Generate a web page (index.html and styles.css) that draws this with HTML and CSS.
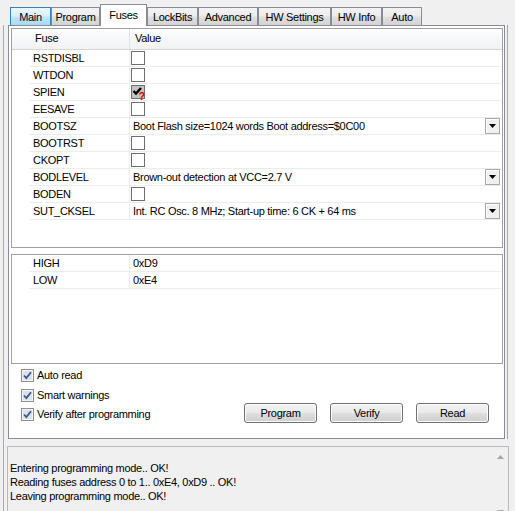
FILE: index.html
```html
<!DOCTYPE html>
<html>
<head>
<meta charset="utf-8">
<link rel="stylesheet" href="styles.css">
</head>
<body>
<div class="app">
  <div class="tabs">
    <div class="tab hover t-main">Main</div>
    <div class="tab t-program">Program</div>
    <div class="tab sel t-fuses">Fuses</div>
    <div class="tab t-lock">LockBits</div>
    <div class="tab t-adv">Advanced</div>
    <div class="tab t-hws">HW Settings</div>
    <div class="tab t-hwi">HW Info</div>
    <div class="tab t-auto">Auto</div>
  </div>
  <div class="main">
    <div class="panel-wrap">
      <div class="panel">
        <div class="grid grid1">
          <div class="hdr"><div class="rh"></div><div class="c1">Fuse</div><div class="c2">Value</div></div>
          <div class="row"><div class="c1">RSTDISBL</div><div class="c2"><span class="cb"></span></div></div>
          <div class="row"><div class="c1">WTDON</div><div class="c2"><span class="cb"></span></div></div>
          <div class="row"><div class="c1">SPIEN</div><div class="c2"><span class="cb ind"><svg width="16" height="16" viewBox="0 0 16 16"><path d="M2.5 6 L5 8.5 L10 3" fill="none" stroke="#000" stroke-width="2.4"/><text x="7.5" y="15" class="q">?</text></svg></span></div></div>
          <div class="row"><div class="c1">EESAVE</div><div class="c2"><span class="cb"></span></div></div>
          <div class="row"><div class="c1">BOOTSZ</div><div class="c2"><span class="val">Boot Flash size=1024 words Boot address=$0C00</span><span class="dd"><svg width="7" height="4" viewBox="0 0 7 4"><polygon points="0,0 7,0 3.5,4" fill="#000"/></svg></span></div></div>
          <div class="row"><div class="c1">BOOTRST</div><div class="c2"><span class="cb"></span></div></div>
          <div class="row"><div class="c1">CKOPT</div><div class="c2"><span class="cb"></span></div></div>
          <div class="row"><div class="c1">BODLEVEL</div><div class="c2"><span class="val">Brown-out detection at VCC=2.7 V</span><span class="dd"><svg width="7" height="4" viewBox="0 0 7 4"><polygon points="0,0 7,0 3.5,4" fill="#000"/></svg></span></div></div>
          <div class="row"><div class="c1">BODEN</div><div class="c2"><span class="cb"></span></div></div>
          <div class="row"><div class="c1">SUT_CKSEL</div><div class="c2"><span class="val">Int. RC Osc. 8 MHz; Start-up time: 6 CK + 64 ms</span><span class="dd"><svg width="7" height="4" viewBox="0 0 7 4"><polygon points="0,0 7,0 3.5,4" fill="#000"/></svg></span></div></div>
        </div>
        <div class="grid grid2">
          <div class="row"><div class="c1">HIGH</div><div class="c2"><span class="val">0xD9</span></div></div>
          <div class="row"><div class="c1">LOW</div><div class="c2"><span class="val">0xE4</span></div></div>
        </div>
        <div class="bottom">
          <div class="checks">
            <div class="chk"><svg class="wcb" width="13" height="13" viewBox="0 0 13 13"><rect x="0.5" y="0.5" width="12" height="12" fill="#f4f4f4" stroke="#8e8f8f"/><rect x="2" y="2" width="9" height="9" fill="#dde1e8"/><path d="M3 6.5 L5.3 9 L10 3.2" fill="none" stroke="#3b5896" stroke-width="1.8"/></svg><span>Auto read</span></div>
            <div class="chk"><svg class="wcb" width="13" height="13" viewBox="0 0 13 13"><rect x="0.5" y="0.5" width="12" height="12" fill="#f4f4f4" stroke="#8e8f8f"/><rect x="2" y="2" width="9" height="9" fill="#dde1e8"/><path d="M3 6.5 L5.3 9 L10 3.2" fill="none" stroke="#3b5896" stroke-width="1.8"/></svg><span>Smart warnings</span></div>
            <div class="chk"><svg class="wcb" width="13" height="13" viewBox="0 0 13 13"><rect x="0.5" y="0.5" width="12" height="12" fill="#f4f4f4" stroke="#8e8f8f"/><rect x="2" y="2" width="9" height="9" fill="#dde1e8"/><path d="M3 6.5 L5.3 9 L10 3.2" fill="none" stroke="#3b5896" stroke-width="1.8"/></svg><span>Verify after programming</span></div>
          </div>
          <div class="btns">
            <button class="btn">Program</button>
            <button class="btn">Verify</button>
            <button class="btn">Read</button>
          </div>
        </div>
      </div>
    </div>
    <div class="log">
      <div class="log-text">
        <div>Entering programming mode.. OK!</div>
        <div>Reading fuses address 0 to 1.. 0xE4, 0xD9 .. OK!</div>
        <div>Leaving programming mode.. OK!</div>
      </div>
      <div class="scroll">
        <span class="arr"><svg width="7" height="4" viewBox="0 0 7 4"><polygon points="0,4 7,4 3.5,0" fill="#a6a6a6"/></svg></span>
        <span class="arr"><svg width="7" height="4" viewBox="0 0 7 4"><polygon points="0,0 7,0 3.5,4" fill="#a6a6a6"/></svg></span>
      </div>
    </div>
  </div>
</div>
</body>
</html>
```
FILE: styles.css
```css
html, body {
  margin: 0;
  background: #f0f0f0;
}
body {
  font-family: "Liberation Sans", Arial, sans-serif;
  font-size: 11px;
  letter-spacing: -0.3px;
  color: #000;
}
.app {
  width: 515px;
  height: 511px;
  overflow: hidden;
  display: flex;
  flex-direction: column;
}
.tabs {
  flex: none;
  display: flex;
  align-items: flex-end;
  height: 26px;
  margin-bottom: -1px;
  padding-left: 10px;
  position: relative;
  z-index: 2;
  box-sizing: border-box;
}
.tab {
  height: 18px;
  margin-bottom: 1px;
  box-sizing: border-box;
  border: 1px solid #898c95;
  border-bottom: none;
  background: linear-gradient(#f3f3f3, #ececec 45%, #dedede 55%, #d4d4d4);
  display: flex;
  align-items: center;
  justify-content: center;
  padding-top: 1px;
}
.tab.hover {
  border-color: #3c7fb1;
  background: linear-gradient(#eaf6fd, #d9f0fc 45%, #bee6fd 55%, #a7d9f5);
}
.tab.sel {
  height: 22px;
  margin-bottom: 0;
  background: #fff;
  padding-top: 0;
  padding-bottom: 2px;
}
.t-main { width: 41px; }
.t-program { width: 49px; }
.t-fuses { width: 47px; }
.t-lock { width: 51px; }
.t-adv { width: 60px; }
.t-hws { width: 73px; }
.t-hwi { width: 51px; }
.t-auto { width: 40px; }

.main {
  flex: none;
  margin-left: 3px;
  border-left: 1px solid #a8a8a8;
  padding-left: 3px;
  display: flex;
  flex-direction: column;
}
.panel-wrap {
  flex: none;
  margin-left: 1px;
  width: 497px;
  padding-right: 2px;
  border-right: 1px solid #a8a8a8;
}
.panel {
  width: 497px;
  height: 414px;
  box-sizing: border-box;
  border: 1px solid #898c95;
  background: #fff;
  display: flex;
  flex-direction: column;
}
.grid {
  margin: 2px 0 0 2px;
  width: 492px;
  box-sizing: border-box;
  border: 1px solid #a0a0a0;
  background: #fff;
  flex: none;
}
.grid1 { height: 220px; }
.grid2 { height: 110px; margin-top: 6px; }

.hdr {
  display: flex;
  height: 21px;
  box-sizing: border-box;
  border-bottom: 1px solid #d5d5d5;
  background: linear-gradient(#ffffff, #f6f7f8 50%, #f1f2f4);
}
.hdr .rh { width: 18px; }
.hdr .c1 {
  width: 100px;
  box-sizing: border-box;
  border-right: 1px solid #e3e3e3;
  padding: 3px 0 0 5px;
}
.hdr .c2 {
  flex: 1;
  padding: 3px 0 0 5px;
}

.row {
  display: flex;
  height: 17px;
  box-sizing: border-box;
  border-bottom: 1px solid #ececec;
  margin: 0 1px 0 18px;
}
.row .c1 {
  width: 100px;
  box-sizing: border-box;
  border-right: 1px solid #ececec;
  padding-left: 3px;
  line-height: 16px;
}
.row .c2 {
  flex: 1;
  display: flex;
  align-items: flex-start;
  padding-left: 3px;
  line-height: 16px;
}
.cb {
  width: 14px;
  height: 14px;
  box-sizing: border-box;
  border: 1px solid #6e6e6e;
  margin: 1px 0 0 -2px;
  background: #fff;
  position: relative;
}
.cb.ind {
  background: #c3c3c3;
}
.cb.ind svg {
  position: absolute;
  left: -1px;
  top: -1px;
  overflow: visible;
}
.q {
  font-family: "Liberation Sans", Arial, sans-serif;
  font-size: 11px;
  font-weight: bold;
  fill: #e00000;
}
.dd {
  margin: 0 1px 0 auto;
  width: 15px;
  height: 16px;
  box-sizing: border-box;
  border: 1px solid #a9a9a9;
  background: #f0f0f0;
  box-shadow: inset 1px 1px 0 #fff;
  display: flex;
  align-items: center;
  justify-content: center;
}

.bottom {
  display: flex;
  padding: 5px 0 0 12px;
}
.checks {
  display: flex;
  flex-direction: column;
}
.chk {
  height: 19.5px;
  display: flex;
  align-items: flex-start;
  gap: 3px;
  line-height: 13px;
}
.wcb { flex: none; }
.btns {
  display: flex;
  gap: 13px;
  margin: 34px 15px 0 auto;
}
.btn {
  width: 73px;
  height: 20px;
  padding: 0;
  box-sizing: border-box;
  border: 1px solid #707070;
  border-radius: 3px;
  background: linear-gradient(#f2f2f2, #ebebeb 45%, #dddddd 55%, #cfcfcf);
  box-shadow: inset 0 0 0 1px #fbfbfb;
  font: inherit;
  letter-spacing: inherit;
  color: #000;
}

.log {
  margin-top: 7px;
  width: 502px;
  height: 80px;
  box-sizing: border-box;
  border: 1px solid #b9b9b9;
  background: #f0f0f0;
  display: flex;
  flex: none;
}
.log-text {
  flex: 1;
  padding: 14px 0 0 2px;
  line-height: 14px;
}
.scroll {
  width: 14px;
  display: flex;
  flex-direction: column;
  justify-content: space-between;
  padding: 8px 1px 11px 0;
}
.arr {
  display: flex;
  justify-content: center;
}
```
